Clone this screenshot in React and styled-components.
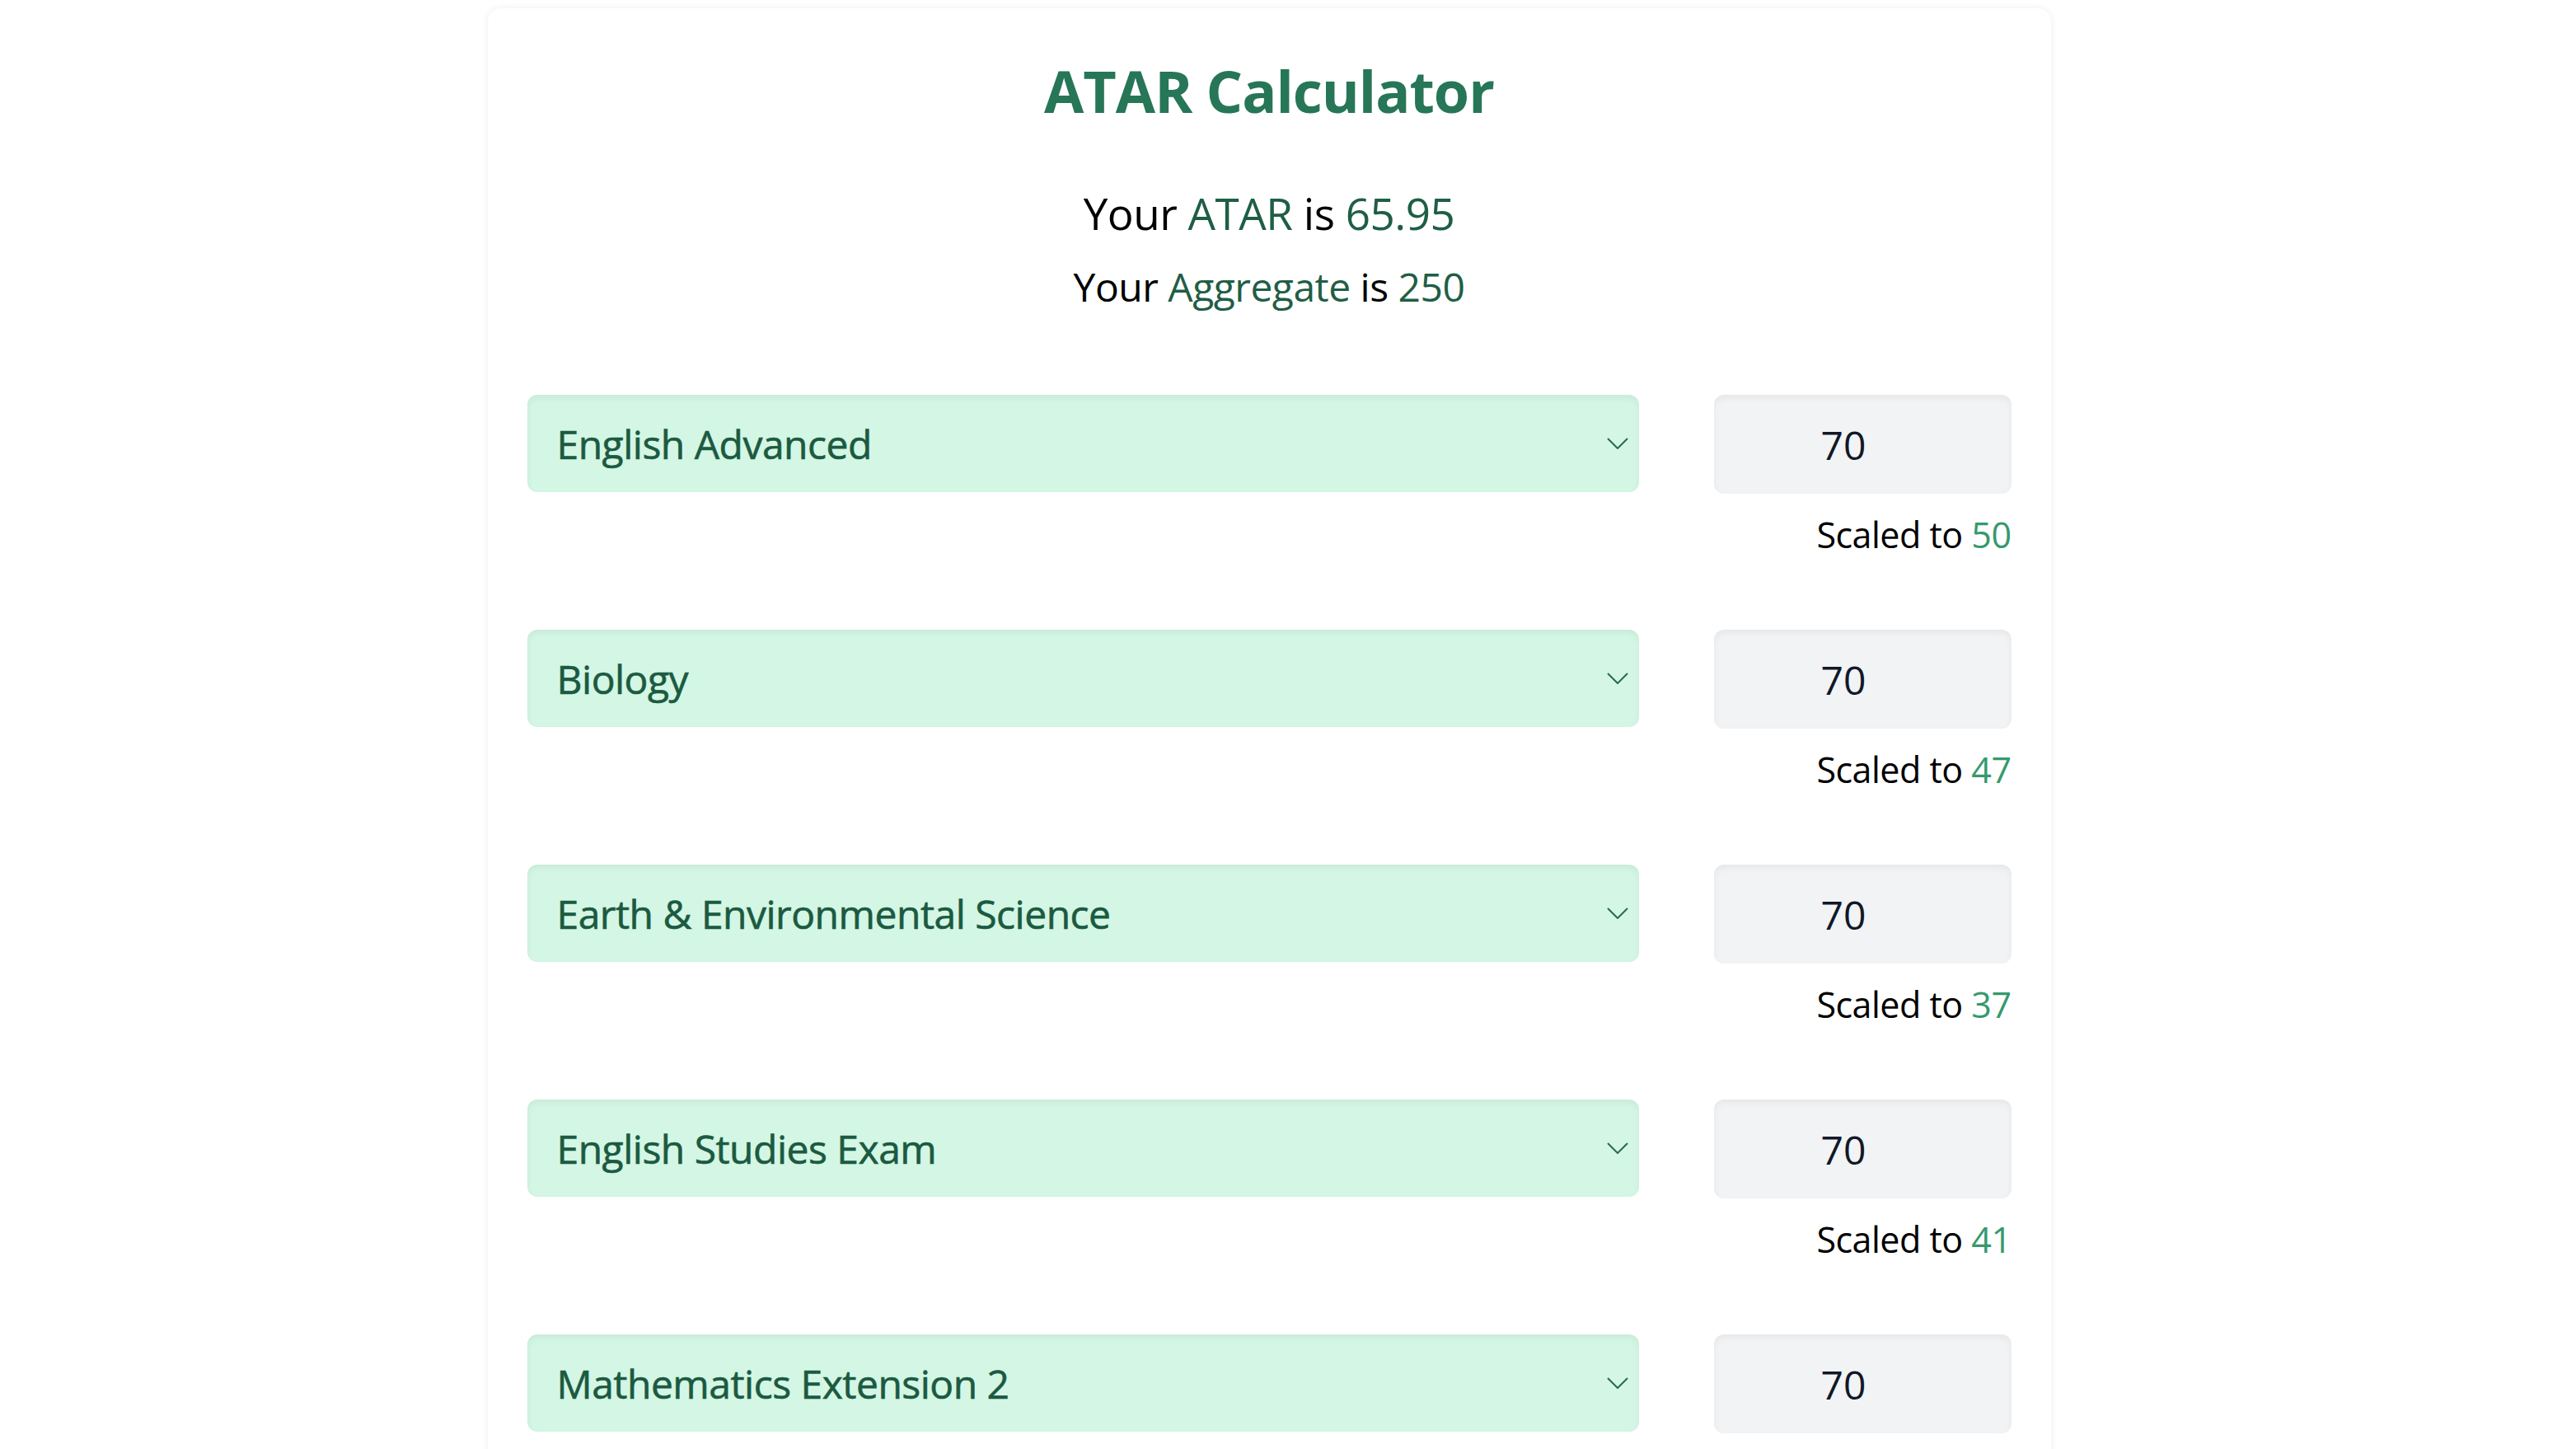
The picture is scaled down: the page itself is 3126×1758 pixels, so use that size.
import React, { useState } from "react";
import styled, { createGlobalStyle } from "styled-components";

const GlobalStyle = createGlobalStyle`
  html, body {
    margin: 0;
    padding: 0;
    background: #ffffff;
  }
  body {
    font-family: "Open Sans", "Noto Sans", "DejaVu Sans", sans-serif;
    color: #000;
  }
`;

const Page = styled.div`
  display: flex;
  justify-content: center;
  padding: 10px 46px 0 0;
`;

const Card = styled.div`
  width: 1897px;
  box-sizing: border-box;
  background: #fff;
  border-radius: 16px;
  box-shadow: 0 0 10px rgba(0, 0, 0, 0.07);
  padding: 58px 48px 80px;
`;

const Title = styled.h1`
  margin: 0;
  text-align: center;
  font-size: 70px;
  line-height: 84px;
  font-weight: 700;
  letter-spacing: -1px;
  color: #267657;
`;

const Summary = styled.div`
  margin-top: 70px;
  display: flex;
  flex-direction: column;
  align-items: center;
  gap: 18px;
`;

const SummaryLine = styled.p`
  margin: 0;
  font-size: ${(p) => p.size}px;
  line-height: 1.4;
  letter-spacing: -0.5px;
  color: #000;
`;

const Accent = styled.span`
  color: ${(p) => p.tone || "#1f5e45"};
`;

const SubjectList = styled.div`
  margin-top: 98px;
  display: flex;
  flex-direction: column;
  gap: 85px;
`;

const Row = styled.div`
  display: flex;
  align-items: flex-start;
  gap: 91px;
`;

const SelectWrap = styled.div`
  position: relative;
  flex: 1;
`;

const SubjectSelect = styled.select`
  appearance: none;
  -webkit-appearance: none;
  width: 100%;
  height: 118px;
  box-sizing: border-box;
  border: none;
  outline: none;
  border-radius: 12px;
  background: #d4f6e4;
  box-shadow: inset 0 4px 8px rgba(0, 0, 0, 0.05);
  padding: 0 80px 0 36px;
  font-family: "Open Sans", "Noto Sans", sans-serif;
  font-size: 48px;
  font-weight: 400;
  letter-spacing: -0.5px;
  color: #1b5a41;
  -webkit-text-stroke: 0.6px #1b5a41;
`;

const Chevron = styled.svg`
  position: absolute;
  right: 13px;
  top: 52px;
  width: 26px;
  height: 14px;
  pointer-events: none;
`;

const ScoreColumn = styled.div`
  width: 361px;
  display: flex;
  flex-direction: column;
  align-items: flex-end;
`;

const ScoreInput = styled.input`
  width: 100%;
  height: 120px;
  box-sizing: border-box;
  border: none;
  outline: none;
  border-radius: 12px;
  background: #f2f3f5;
  box-shadow: inset 0 4px 8px rgba(0, 0, 0, 0.05);
  padding: 0 70px 0 24px;
  text-align: center;
  font-family: "Open Sans", "Noto Sans", sans-serif;
  font-size: 48px;
  font-weight: 500;
  color: #111827;
`;

const Scaled = styled.div`
  margin-top: 20px;
  font-size: 43px;
  line-height: 60px;
  letter-spacing: -0.5px;
  color: #000;
`;

const subjects = [
  { name: "English Advanced", mark: 70, scaled: 50 },
  { name: "Biology", mark: 70, scaled: 47 },
  { name: "Earth & Environmental Science", mark: 70, scaled: 37 },
  { name: "English Studies Exam", mark: 70, scaled: 41 },
  { name: "Mathematics Extension 2", mark: 70, scaled: 45 },
];

const SubjectRow = ({ subject }) => {
  const [mark, setMark] = useState(subject.mark);
  return (
    <Row>
      <SelectWrap>
        <SubjectSelect defaultValue={subject.name}>
          {subjects.map((s) => (
            <option key={s.name} value={s.name}>
              {s.name}
            </option>
          ))}
        </SubjectSelect>
        <Chevron viewBox="0 0 26 14" fill="none">
          <path d="M1 1 L13 13 L25 1" stroke="#2a6a50" strokeWidth="2" />
        </Chevron>
      </SelectWrap>
      <ScoreColumn>
        <ScoreInput
          type="text"
          inputMode="numeric"
          value={mark}
          onChange={(e) => setMark(e.target.value)}
        />
        <Scaled>
          Scaled to <Accent tone="#36996d">{subject.scaled}</Accent>
        </Scaled>
      </ScoreColumn>
    </Row>
  );
};

const App = () => {
  return (
    <>
      <GlobalStyle />
      <Page>
        <Card>
          <Title>ATAR Calculator</Title>
          <Summary>
            <SummaryLine size={53}>
              Your <Accent>ATAR</Accent> is <Accent>65.95</Accent>
            </SummaryLine>
            <SummaryLine size={48}>
              Your <Accent>Aggregate</Accent> is <Accent>250</Accent>
            </SummaryLine>
          </Summary>
          <SubjectList>
            {subjects.map((s) => (
              <SubjectRow key={s.name} subject={s} />
            ))}
          </SubjectList>
        </Card>
      </Page>
    </>
  );
};

export default App;
